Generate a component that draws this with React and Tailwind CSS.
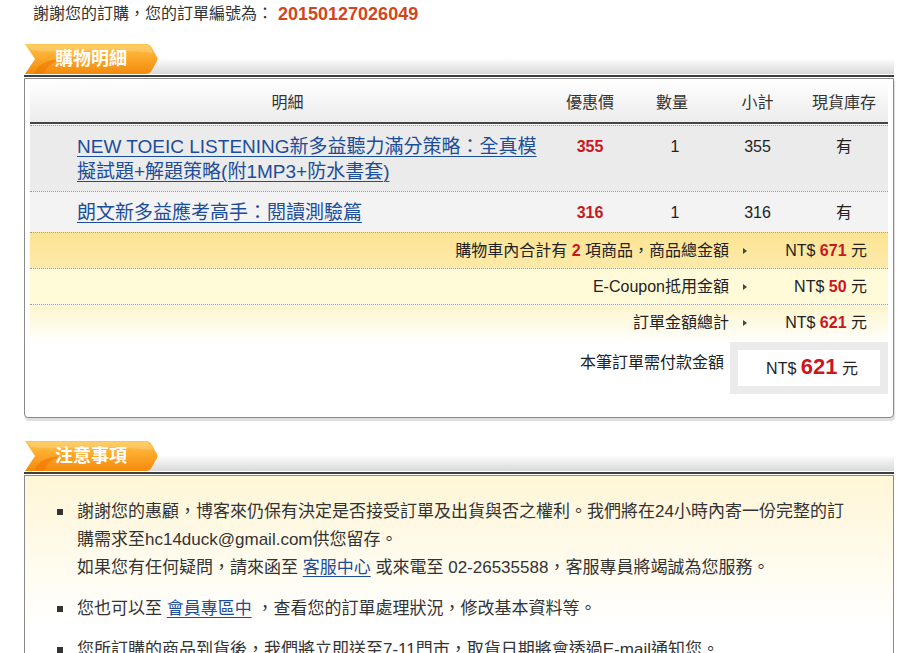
import React from "react";

const F = "font-['Liberation_Sans','Noto_Sans_CJK_TC',sans-serif]";

function Tab({ label, gid }) {
  return (
    <div className="flex items-end">
      <div className="relative w-[133px] h-[30px] shrink-0 z-10">
        <svg className="absolute inset-0" width="133" height="30" viewBox="0 0 133 30">
          <defs>
            <linearGradient id={gid} x1="0" y1="0" x2="0" y2="1">
              <stop offset="0" stopColor="#ffc64a" />
              <stop offset="0.45" stopColor="#fca92c" />
              <stop offset="1" stopColor="#f48a0c" />
            </linearGradient>
          </defs>
          <path d="M0,0 H121 Q125,0 127,4 L132,13 Q133,15 132,17 L127,26 Q125,30 121,30 H0 L10,15 Z" fill={`url(#${gid})`} />
          <path d="M9,30 C12,21 22,15 38,15 C27,18 21,23 19,30 Z" fill="#ee7400" opacity="0.55" />
          <path d="M2,1 H120 Q124,1 126,5 L128,9 Q90,5 40,7 Q15,8 6,6 Z" fill="#ffffff" opacity="0.18" />
        </svg>
        <span className="absolute left-[30px] top-[2px] text-[18px] leading-[26px] font-bold text-white">{label}</span>
      </div>
      <div className="flex-1 h-[16px] -ml-[10px] bg-gradient-to-b from-white to-[#d8d8d8]" />
    </div>
  );
}

function Arrow() {
  return <span className="inline-block ml-[14px] w-0 h-0 border-l-[4px] border-l-[#444] border-y-[3px] border-y-transparent" />;
}

export default function App() {
  return (
    <div className={`${F} bg-white w-[923px] min-h-[653px] text-[#333]`}>
      <div className="ml-[24px] w-[870px] pt-[4px]">
        <div className="pl-[9px] h-[20px] flex items-center text-[16px]">
          <span>謝謝您的訂購，您的訂單編號為：</span>
          <span className="ml-[5px] text-[18px] font-bold text-[#d2461e]">20150127026049</span>
        </div>

        {/* Section 1 */}
        <div className="mt-[20px] pl-[1px]">
          <Tab label="購物明細" gid="g1" />
        </div>
        <div className="h-[2px] bg-[#3d3d3d] mt-[1px]" />
        <div className="mt-[1px] border border-[#8a8a8a] rounded-b-[4px] bg-white px-[5px] pb-[22px] shadow-[1px_3px_1px_#dedede]">
          <div className="grid grid-cols-[515px_90px_80px_85px_1fr] h-[43px] pt-[4px] items-center bg-gradient-to-b from-white to-[#ececec] text-[16px] leading-[20px] text-[#333]">
            <div className="text-center">明細</div>
            <div className="text-center">優惠價</div>
            <div className="text-center pr-[6px]">數量</div>
            <div className="text-center">小計</div>
            <div className="text-center">現貨庫存</div>
          </div>
          <div className="h-[2px] bg-[#444]" />
          <div className="mt-[1px] border-t border-dotted border-[#9a9a9a] bg-[#ebebeb] grid grid-cols-[515px_90px_80px_85px_1fr] pt-[8px] pb-[7px] text-[16px] leading-[25px] text-[#222]">
            <div className="pl-[47px] text-[19px] leading-[25px]">
              <a href="#" className="text-[#1c4d98] underline underline-offset-[3px] decoration-[1px]">
                NEW TOEIC LISTENING新多益聽力滿分策略：全真模<br />擬試題+解題策略(附1MP3+防水書套)
              </a>
            </div>
            <div className="text-center font-bold text-[#c8171e]">355</div>
            <div className="text-center">1</div>
            <div className="text-center">355</div>
            <div className="text-center">有</div>
          </div>
          <div className="border-t border-dotted border-[#9a9a9a] bg-[#f3f3f3] grid grid-cols-[515px_90px_80px_85px_1fr] pt-[8px] pb-[7px] text-[16px] leading-[25px] text-[#222]">
            <div className="pl-[47px] text-[19px] leading-[25px]">
              <a href="#" className="text-[#1c4d98] underline underline-offset-[3px] decoration-[1px]">
                朗文新多益應考高手：閱讀測驗篇
              </a>
            </div>
            <div className="text-center font-bold text-[#c8171e]">316</div>
            <div className="text-center">1</div>
            <div className="text-center">316</div>
            <div className="text-center">有</div>
          </div>

          <div className="border-t border-dotted border-[#9a9a9a] h-[36px] flex items-center justify-end pr-[21px] bg-gradient-to-b from-[#fde493] to-[#fdeaa9] text-[16px] text-[#222]">
            <span>購物車內合計有 <b className="text-[#c8171e]">2</b> 項商品，商品總金額</span>
            <Arrow />
            <span className="w-[120px] text-right">NT$ <b className="text-[#c8171e]">671</b> 元</span>
          </div>
          <div className="border-t border-dotted border-[#9a9a9a] h-[36px] flex items-center justify-end pr-[21px] bg-[#fffad8] text-[16px] text-[#222]">
            <span>E-Coupon抵用金額</span>
            <Arrow />
            <span className="w-[120px] text-right">NT$ <b className="text-[#c8171e]">50</b> 元</span>
          </div>
          <div className="border-t border-dotted border-[#9a9a9a] h-[36px] flex items-center justify-end pr-[21px] bg-gradient-to-b from-[#fff5cc] to-[#fffefa] text-[16px] text-[#222]">
            <span>訂單金額總計</span>
            <Arrow />
            <span className="w-[120px] text-right">NT$ <b className="text-[#c8171e]">621</b> 元</span>
          </div>
          <div className="flex justify-end items-start pt-[2px] pb-[1px] text-[16px] text-[#222]">
            <span className="mt-[11px] mr-[6px] leading-[20px]">本筆訂單需付款金額</span>
            <div className="bg-[#ebebeb] p-[8px]">
              <div className="w-[142px] h-[36px] bg-white flex items-center justify-center pl-[6px] leading-[24px]">
                <span>NT$ <b className="text-[22px] text-[#c8171e]">621</b> 元</span>
              </div>
            </div>
          </div>
        </div>

        {/* Section 2 */}
        <div className="mt-[23px] pl-[1px]">
          <Tab label="注意事項" gid="g2" />
        </div>
        <div className="h-[2px] bg-[#3d3d3d] mt-[1px]" />
        <div className="mt-[1px] border border-b-0 border-[#8a8a8a] bg-[linear-gradient(to_bottom,#fff6d6,#ffffff_150px)] pt-[22px] pl-[32px] pb-[20px] text-[17px] leading-[28px] text-[#333]">
          <ul>
            <li className="flex mb-[13px]">
              <span className="w-[6px] h-[6px] bg-[#333] mt-[11px] mr-[14px] shrink-0" />
              <div className="whitespace-nowrap">
                謝謝您的惠顧，博客來仍保有決定是否接受訂單及出貨與否之權利。我們將在24小時內寄一份完整的訂<br />
                購需求至hc14duck@gmail.com供您留存。<br />
                如果您有任何疑問，請來函至 <a href="#" className="text-[#1c4d98] underline underline-offset-[3px]">客服中心</a> 或來電至 02-26535588，客服專員將竭誠為您服務。
              </div>
            </li>
            <li className="flex mb-[13px]">
              <span className="w-[6px] h-[6px] bg-[#333] mt-[11px] mr-[14px] shrink-0" />
              <div className="whitespace-nowrap">
                您也可以至 <a href="#" className="text-[#1c4d98] underline underline-offset-[3px]">會員專區中</a> ，查看您的訂單處理狀況，修改基本資料等。
              </div>
            </li>
            <li className="flex mb-[13px]">
              <span className="w-[6px] h-[6px] bg-[#333] mt-[11px] mr-[14px] shrink-0" />
              <div className="whitespace-nowrap">
                您所訂購的商品到貨後，我們將立即送至7-11門市，取貨日期將會透過E-mail通知您。
              </div>
            </li>
          </ul>
        </div>
      </div>
    </div>
  );
}
